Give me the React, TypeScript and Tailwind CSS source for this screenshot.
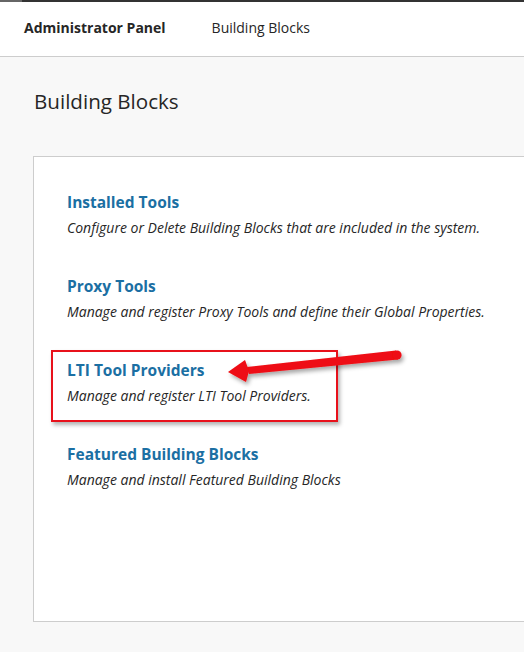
const items = [
  { title: 'Installed Tools', desc: 'Configure or Delete Building Blocks that are included in the system.' },
  { title: 'Proxy Tools', desc: 'Manage and register Proxy Tools and define their Global Properties.' },
  { title: 'LTI Tool Providers', desc: 'Manage and register LTI Tool Providers.', marked: true },
  { title: 'Featured Building Blocks', desc: 'Manage and install Featured Building Blocks' },
];

export default function App() {
  return (
    <div className="relative w-[524px] h-[652px] overflow-hidden bg-[#f8f8f8] font-['Open_Sans',sans-serif] text-[#262626]">
      {/* top strip */}
      <div className="flex h-[2px]">
        <div className="w-[22px] bg-[#666]" />
        <div className="flex-1 bg-[#333]" />
      </div>

      <header className="h-[55px] bg-white border-b border-[#cdcdcd] flex items-center pl-6 pb-[4px]">
        <span className="text-[14px] font-bold text-[#262626]">Administrator Panel</span>
        <span className="ml-[46px] text-[14px] text-[#262626]">Building Blocks</span>
      </header>

      <h1 className="pl-[34px] pt-[30px] h-[99px] text-[20.6px] leading-[28px] font-normal text-[#262626]">Building Blocks</h1>

      <div className="ml-[33px] w-[520px] h-[466px] bg-white border border-[#cdcdcd] pt-[34px] pl-[33px]">
        {items.map(item => (
          <div key={item.title} className="relative h-[84px]">
            {item.marked && (
              <div className="absolute left-[-16px] top-[-9px] w-[287px] h-[72px] border-2 border-[#e8111b] shadow-[2px_3px_4px_rgba(0,0,0,0.3)]" />
            )}
            <div className="relative text-[15.5px] leading-[22px] font-bold text-[#1b6fa3]">{item.title}</div>
            <div className="relative mt-[5px] text-[14px] leading-[20px] italic text-[#262626]">{item.desc}</div>
          </div>
        ))}
      </div>

      {/* annotation arrow */}
      <svg className="absolute left-0 top-0" width="524" height="652" viewBox="0 0 524 652">
        <defs>
          <filter id="shadow" x="-10%" y="-50%" width="120%" height="200%">
            <feDropShadow dx="2" dy="3" stdDeviation="2" floodColor="#000" floodOpacity="0.35" />
          </filter>
        </defs>
        <g fill="#ee0a12" filter="url(#shadow)">
          <polygon points="396,350.5 398,359.5 249,374 247,367" />
          <circle cx="397" cy="355" r="4.6" />
          <polygon points="228,372 245,360 249,371 246,382" />
        </g>
      </svg>
    </div>
  );
}
